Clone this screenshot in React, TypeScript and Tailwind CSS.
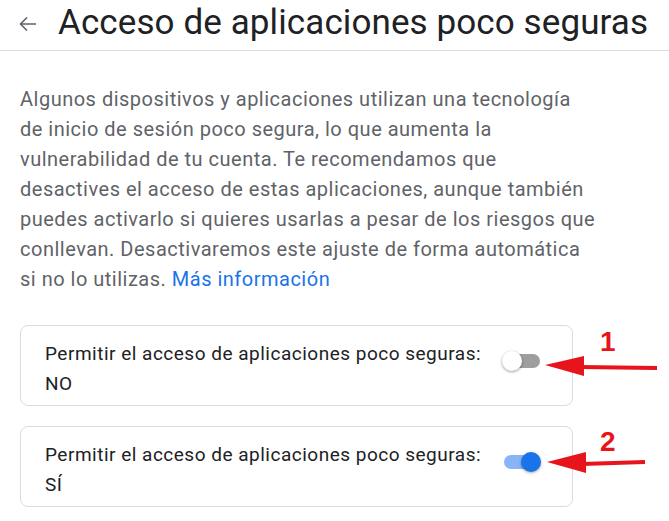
import React from "react";

const font = { fontFamily: "Roboto, 'Noto Sans', Arial, sans-serif" };

function Toggle({ on }: { on: boolean }) {
  return (
    <div className="relative w-[40px] h-[20px] shrink-0">
      <div
        className={
          on
            ? "absolute left-[2px] top-[3px] w-[36px] h-[14px] rounded-full bg-[#8ab4f8]"
            : "absolute left-[2px] top-[3px] w-[36px] h-[14px] rounded-full bg-[#9e9e9e]"
        }
      />
      <div
        className={
          on
            ? "absolute left-[19px] top-0 w-[20px] h-[20px] rounded-full bg-[#1a73e8] shadow-[0_1px_3px_rgba(0,0,0,0.35)]"
            : "absolute left-0 top-0 w-[20px] h-[20px] rounded-full bg-white shadow-[0_1px_3px_rgba(0,0,0,0.4)]"
        }
      />
    </div>
  );
}

function SettingCard({ value, on }: { value: string; on: boolean }) {
  return (
    <div className="w-[553px] h-[81px] rounded-[8px] border border-[#dadce0] pl-[24px] pr-[30px] pt-[13px] flex items-start justify-between">
      <div className="text-[19px] leading-[30px] tracking-[0.5px] text-[#202124] whitespace-nowrap">
        <div>Permitir el acceso de aplicaciones poco seguras:</div>
        <div>{value}</div>
      </div>
      <div className="mt-[12px]">
        <Toggle on={on} />
      </div>
    </div>
  );
}

export default function App() {
  return (
    <div className="relative w-[669px] h-[521px] bg-white overflow-hidden" style={font}>
      <header className="h-[51px] flex items-center border-b border-[#dadce0]">
        <svg className="ml-[19px] mr-[21px] -mt-[2px]" width="18" height="16" viewBox="0 0 18 16" fill="none">
          <path d="M17 8H2M8 1.5L1.5 8L8 14.5" stroke="#5f6368" strokeWidth="1.6" />
        </svg>
        <h1 className="text-[35px] leading-none text-[#202124] tracking-[0.1px] -mt-[6px] whitespace-nowrap">
          Acceso de aplicaciones poco seguras
        </h1>
      </header>

      <p className="mt-[33px] px-[20px] text-[20px] leading-[30px] tracking-[0.5px] text-[#5f6368] whitespace-nowrap">
        Algunos dispositivos y aplicaciones utilizan una tecnología
        <br />
        de inicio de sesión poco segura, lo que aumenta la
        <br />
        vulnerabilidad de tu cuenta. Te recomendamos que
        <br />
        desactives el acceso de estas aplicaciones, aunque también
        <br />
        puedes activarlo si quieres usarlas a pesar de los riesgos que
        <br />
        conllevan. Desactivaremos este ajuste de forma automática
        <br />
        si no lo utilizas. <span className="text-[#1a73e8]">Más información</span>
      </p>

      <div className="mt-[31px] ml-[20px] flex flex-col gap-[20px]">
        <SettingCard value="NO" on={false} />
        <SettingCard value="SÍ" on={true} />
      </div>

      {/* annotation overlay: numbered red arrows pointing at the switches */}
      <svg className="absolute left-0 top-0 pointer-events-none" width="669" height="521" viewBox="0 0 669 521">
        <line x1="580" y1="367" x2="657" y2="368" stroke="#e8141b" strokeWidth="4" />
        <polygon points="545,365 584,356 584,376" fill="#e8141b" />
        <line x1="582" y1="464" x2="645" y2="462" stroke="#e8141b" strokeWidth="4" />
        <polygon points="547,462 586,452 586,473" fill="#e8141b" />
      </svg>
      <div
        className="absolute left-[600px] top-[328px] text-[28px] font-bold leading-none text-[#e8141b]"
        style={{ fontFamily: "'Liberation Sans', Arial, sans-serif" }}
      >
        1
      </div>
      <div
        className="absolute left-[600px] top-[428px] text-[28px] font-bold leading-none text-[#e8141b]"
        style={{ fontFamily: "'Liberation Sans', Arial, sans-serif" }}
      >
        2
      </div>
    </div>
  );
}
